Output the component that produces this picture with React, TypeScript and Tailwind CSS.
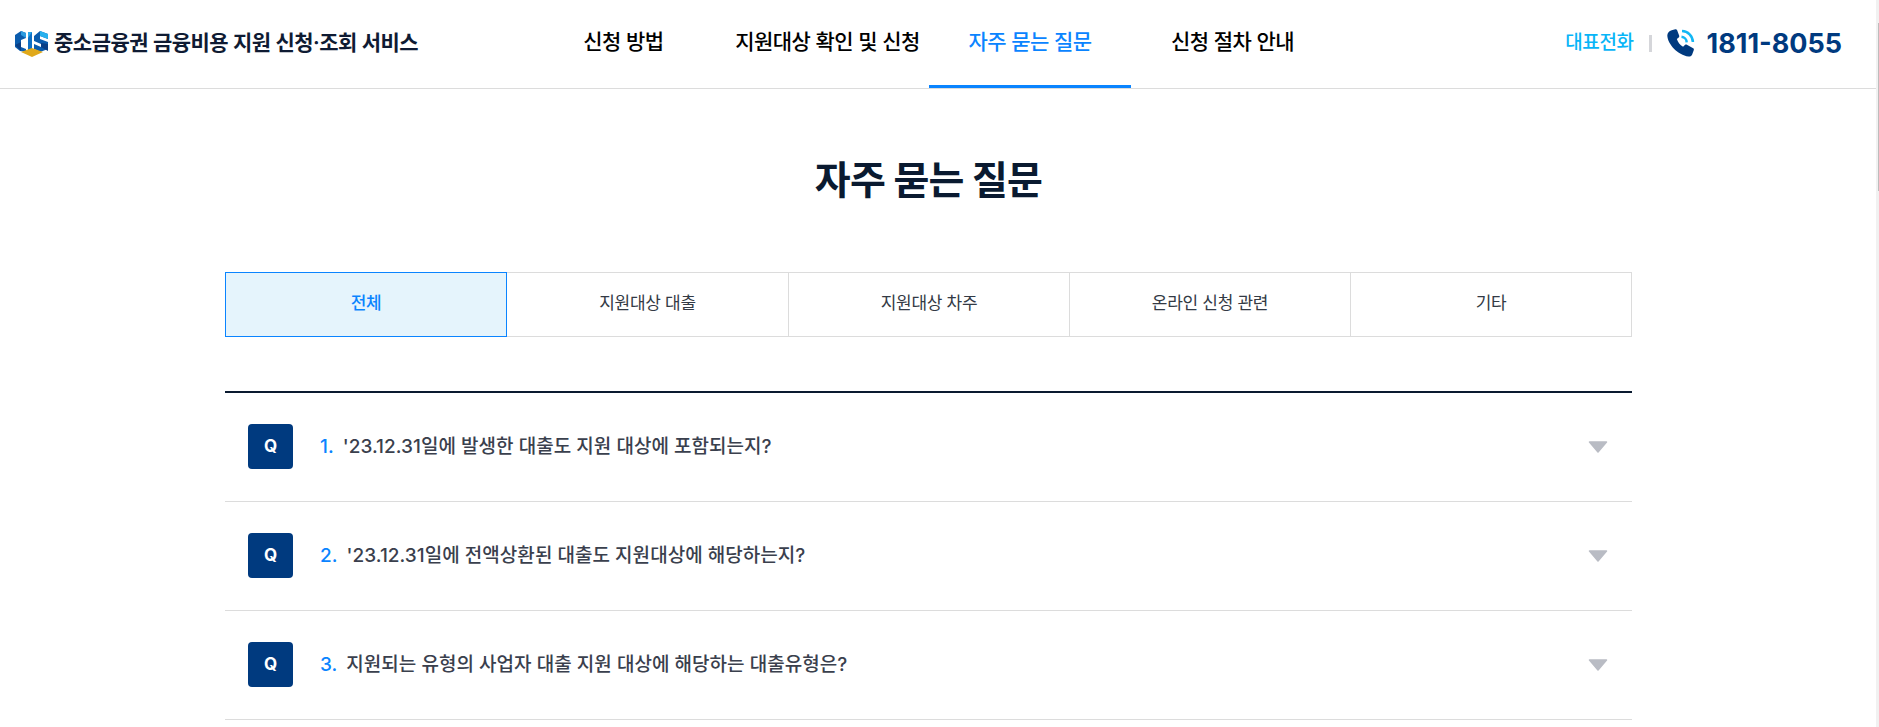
import { useState } from "react";

const NAV = [
  { label: "신청 방법", width: "w-[205px]" },
  { label: "지원대상 확인 및 신청", width: "w-[203px]" },
  { label: "자주 묻는 질문", width: "w-[202px]", active: true },
  { label: "신청 절차 안내", width: "w-[203px]" },
];

const TABS = ["전체", "지원대상 대출", "지원대상 차주", "온라인 신청 관련", "기타"];

const FAQ = [
  "'23.12.31일에 발생한 대출도 지원 대상에 포함되는지?",
  "'23.12.31일에 전액상환된 대출도 지원대상에 해당하는지?",
  "지원되는 유형의 사업자 대출 지원 대상에 해당하는 대출유형은?",
];

function Logo() {
  return (
    <svg width="33" height="27" viewBox="0 0 33 27" className="shrink-0">
      <path d="M0 5 6 1l5 2v5L6 10v7l5 2v3l-6-1-5-4z" fill="#0b5cad" />
      <path d="M6 1l5 2v5L6 5z" fill="#2a9be0" />
      <path d="M0 15l6-3v9z" fill="#0a3f86" />
      <path d="M13 2h4v19l-4 1z" fill="#0f6fc4" />
      <path d="M13 2h4l-4 6z" fill="#29a9ea" />
      <path d="M19 6l6-5 8 3v5l-8-3v3l8 3v7l-8 3-6-3v-5l7 3v-3l-7-3z" fill="#0b5cad" />
      <path d="M25 1l8 3v5l-8-3z" fill="#27b1ee" />
      <path d="M26 13l7 1v7l-7-4z" fill="#0a3f86" />
      <path d="M6 22l11-4 11 4-11 5z" fill="#e0a91b" />
    </svg>
  );
}

function PhoneIcon() {
  return (
    <svg width="29" height="29" viewBox="0 0 28 28" className="shrink-0">
      <path
        d="M4.500 1.200 8 .2c.7-.2 1.400.2 1.700.8l2.100 5.600c.2.600 0 1.200-.5 1.600L9.500 9.700c1 3.200 3 5.600 6 7.400l2-1.800c.5-.4 1.100-.5 1.700-.2l6.100 3.500c.6.300.8 1 .6 1.600l-1.500 4.200c-.5 1.400-2 2.400-3.600 2.200C10.500 25.300.5 14.500.3 6.300.3 4 2 1.900 4.500 1.200z"
        fill="#003a7f"
      />
      <path d="M14 7.500a5.500 5.500 0 0 1 5 5.400" fill="none" stroke="#12b7f5" strokeWidth="2.400" />
      <path d="M14.500 2a10.800 10.800 0 0 1 10.500 10.500" fill="none" stroke="#12b7f5" strokeWidth="2.400" />
    </svg>
  );
}

export default function App() {
  const [tab, setTab] = useState(0);

  return (
    <div className="relative h-[727px] overflow-hidden bg-white font-['Inter','Noto_Sans_CJK_KR',sans-serif] flex">
      <div className="flex-1 min-w-0">
        <header className="h-[89px] border-b border-[#dcdcdc] flex items-center">
          <div className="w-[429px] pl-[15px] pb-[2px] flex items-center gap-[6px]">
            <Logo />
            <span className="text-[21px] font-semibold tracking-[-0.5px] text-[#0f1b33] whitespace-nowrap">
              중소금융권 금융비용 지원 신청·조회 서비스
            </span>
          </div>
          <nav className="flex h-full ml-[92px]">
            {NAV.map((item) => (
              <a
                key={item.label}
                className={`${item.width} h-full pb-[2px] flex items-center justify-center text-[21px] font-medium tracking-[-0.5px] whitespace-nowrap ${
                  item.active ? "text-[#0a84ff] border-b-[3px] border-[#0a84ff]" : "text-black border-b-[3px] border-transparent"
                }`}
              >
                {item.label}
              </a>
            ))}
          </nav>
          <div className="ml-auto pr-[34px] pb-[2px] flex items-center">
            <span className="text-[19px] font-medium text-[#08b5f7] tracking-[-0.4px]">대표전화</span>
            <span className="w-[3px] h-[17px] bg-[#d5d6da] mx-[15px]" />
            <PhoneIcon />
            <span className="ml-[11px] text-[27px] font-bold text-[#003a7f] leading-none">1811-8055</span>
          </div>
        </header>

        <main className="w-[1407px] ml-[225px]">
          <h1 className="mt-[68px] text-center text-[39px] leading-[46px] font-bold tracking-[-0.8px] text-[#0a1a30]">
            자주 묻는 질문
          </h1>

          <div className="mt-[69px] grid grid-cols-[282px_282px_281px_281px_281px] h-[65px]">
            {TABS.map((label, i) => (
              <button
                key={label}
                onClick={() => setTab(i)}
                className={`pb-[2px] text-[17px] tracking-[-0.3px] border ${i > 0 ? "-ml-px" : ""} ${
                  tab === i
                    ? "relative z-10 bg-[#e5f4fc] border-[#0a84ff] text-[#0a84ff] font-medium"
                    : "border-[#dcdcdc] text-[#333a45]"
                }`}
              >
                {label}
              </button>
            ))}
          </div>

          <ul className="mt-[54px] border-t-2 border-[#0a1a30]">
            {FAQ.map((q, i) => (
              <li key={i} className="h-[109px] border-b border-[#dcdcdc] flex items-center pl-[23px] pr-[24px]">
                <span className="w-[45px] h-[45px] -mt-[2px] pt-[2px] rounded-[4px] bg-[#003a7f] text-white font-bold text-[17px] flex items-center justify-center">
                  Q
                </span>
                <p className="ml-[27px] flex-1 text-[19px] font-medium tracking-[0.03px] text-[#3a404d]">
                  <span className="text-[#0a84ff] mr-[9px]">{i + 1}.</span>
                  {q}
                </p>
                <svg width="20" height="12" viewBox="0 0 20 12">
                  <path d="M1.500 1h17L10 11z" fill="#b9bcc4" stroke="#b9bcc4" strokeWidth="1.500" strokeLinejoin="round" />
                </svg>
              </li>
            ))}
          </ul>
        </main>
      </div>
      <div className="relative w-[3px] bg-[#f1f1f1]">
        <div className="absolute right-0 top-[23px] h-[168px] w-px bg-[#bdbdbd]" />
      </div>
    </div>
  );
}
